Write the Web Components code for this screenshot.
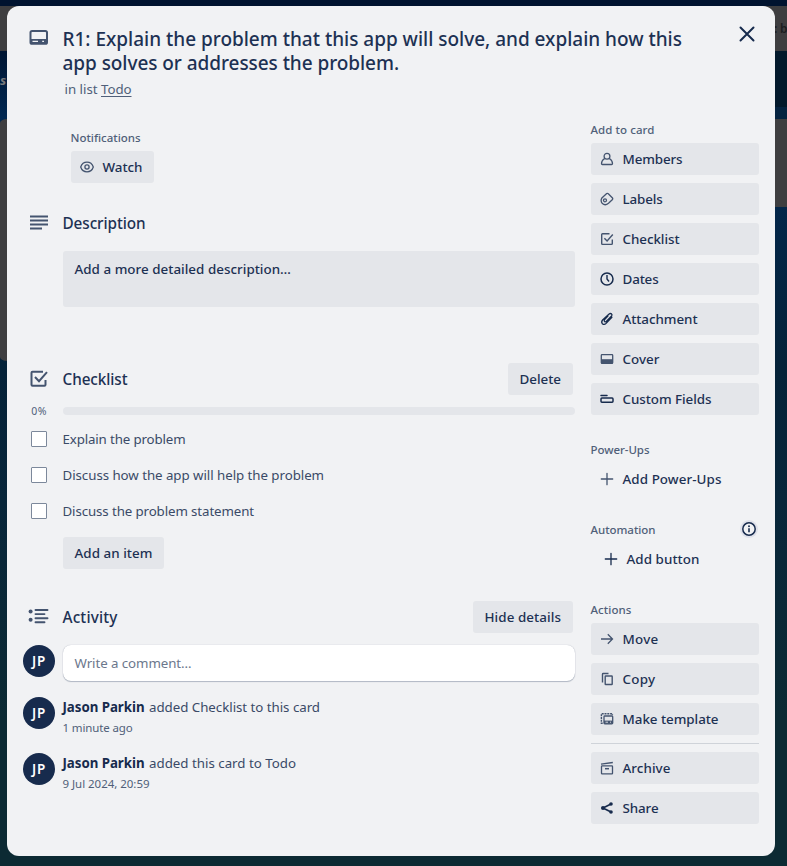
<!DOCTYPE html>
<html lang="en">
<head>
<meta charset="utf-8">
<title>Card</title>
<style>
html,body{margin:0;height:866px;overflow:hidden}
body{font-family:"Noto Sans","Open Sans",sans-serif;color:#1d3153}
</style>
</head>
<body>
<board-backdrop>
  <card-dialog>
    <card-header slot="header"></card-header>
    <card-main></card-main>
    <card-sidebar></card-sidebar>
  </card-dialog>
</board-backdrop>
<script>
const icons = {
  card:[20,20,'<rect x="1.500" y="4" width="16.500" height="12.800" rx="1.600" fill="none" stroke="currentColor" stroke-width="2"/><path d="M1.500 12h16.500v4.800H1.500z" fill="currentColor"/><path d="M3.500 14.300h5.500M13.200 14.300h1.800" stroke="#f1f2f4" stroke-width="1.300"/>'],
  lines:[20,20,'<path d="M1 3.500h18M1 7.500h18M1 11.500h18M1 15.500h12" fill="none" stroke="currentColor" stroke-width="2"/>'],
  check:[20,20,'<path d="M14 2.700H3.500Q2.500 2.700 2.500 3.700V15.700q0 1 1 1H15.500q1 0 1-1V11" fill="none" stroke="currentColor" stroke-width="2"/><path d="m6 8 4 4.200 8-9" fill="none" stroke="currentColor" stroke-width="2"/>'],
  activity:[22,20,'<circle cx="2.600" cy="4.500" r="2" fill="currentColor"/><circle cx="2.600" cy="12.700" r="2" fill="currentColor"/><path d="M7.500 3h12M7.500 7.100h9M7.500 11.200h12M7.500 15.300h9" stroke="currentColor" stroke-width="1.900" stroke-linecap="round"/>'],
  close:[18,18,'<path d="M2.500 2.500l13 13M15.500 2.500l-13 13" fill="none" stroke="currentColor" stroke-width="2" stroke-linecap="round"/>'],
  eye:[16,16,'<path d="M1.700 8C2.700 5 5 3.200 8 3.200S13.300 5 14.300 8C13.300 11 11 12.800 8 12.800S2.700 11 1.700 8Z" fill="none" stroke="currentColor" stroke-width="1.300"/><circle cx="8" cy="8" r="2.100" fill="none" stroke="currentColor" stroke-width="1.300"/>'],
  member:[16,16,'<circle cx="8" cy="5.200" r="2.900" fill="none" stroke="currentColor" stroke-width="1.300"/><path d="M5.700 7.500C3.500 8.700 2.500 10.500 2.500 12.600q0 .9.900.9h9.200q.9 0 .9-.9c0-2.100-1-3.900-3.200-5.100" fill="none" stroke="currentColor" stroke-width="1.300"/>'],
  label:[16,16,'<path d="M7.700 2.600q.8-.6 1.600.1l4.200 4.300q.6.800 0 1.500L9.500 12.300Q6.200 15 3.400 12.600 1.100 10 2.900 6.900Z" fill="none" stroke="currentColor" stroke-width="1.300"/><circle cx="6" cy="9.300" r="1.500" fill="none" stroke="currentColor" stroke-width="1.300"/>'],
  checklist:[16,16,'<path d="M10.500 2.800H3.500q-.8 0-.8.800v9q0 .8.800.8h9q.8 0 .8-.8V8.500" fill="none" stroke="currentColor" stroke-width="1.400"/><path d="m5.400 7.200 2.700 2.800 5.700-6.500" fill="none" stroke="currentColor" stroke-width="1.400"/>'],
  clock:[16,16,'<circle cx="8" cy="8" r="6" fill="none" stroke="currentColor" stroke-width="1.500"/><path d="M8 4v4l2 2.500" fill="none" stroke="currentColor" stroke-width="1.400"/>'],
  clip:[16,16,'<path d="M8.900 5.100 5.600 8.600q-.9 1.100 0 1.900 1 .8 1.900-.2l5.100-5.400q.9-1.200-.1-2-1.300-.9-2.400.2L3.600 9q-1.700 2.100-.2 3.700 1.800 1.500 3.700-.3l5.800-6.100" fill="none" stroke="currentColor" stroke-width="1.300" stroke-linecap="round"/>'],
  cover:[16,16,'<rect x="2.300" y="3.700" width="11.400" height="8.600" rx=".7" fill="none" stroke="currentColor" stroke-width="1.300"/><path d="M2 8.200h12v4.500H2z" fill="currentColor"/>'],
  fields:[16,16,'<path d="M2 4.500h6" stroke="currentColor" stroke-width="1.500" stroke-linecap="round"/><rect x="2" y="7" width="12" height="4.200" rx=".9" fill="none" stroke="currentColor" stroke-width="1.500"/>'],
  plus:[16,16,'<path d="M8 2.300v11.400M2.300 8h11.400" stroke="currentColor" stroke-width="1.300" stroke-linecap="round"/>'],
  arrow:[16,16,'<path d="M2 8h11M8.800 3.300 13.500 8l-4.700 4.700" fill="none" stroke="currentColor" stroke-width="1.300"/>'],
  copy:[16,16,'<path d="M3.500 11.500V3.200q0-.7.700-.7H9.500" fill="none" stroke="currentColor" stroke-width="1.400"/><rect x="6.200" y="5" width="7" height="8.500" rx=".5" fill="none" stroke="currentColor" stroke-width="1.400"/>'],
  template:[16,16,'<path d="M3.700 12.300H2.400V2.700h11v1.200" fill="none" stroke="currentColor" stroke-width="1.400" stroke-dasharray="2 .8"/><rect x="5" y="5" width="8.700" height="7.800" rx=".8" fill="none" stroke="currentColor" stroke-width="1.300"/><path d="M5 9.600h9v3.200H5z" fill="currentColor"/><path d="M6.500 11.200h2.500M11 11.200h1" stroke="#e4e6ea" stroke-width=".9"/>'],
  archive:[16,16,'<path d="M2 4.100 13.800 2.500" stroke="currentColor" stroke-width="1.300"/><rect x="2.500" y="5.800" width="11" height="8" rx=".6" fill="none" stroke="currentColor" stroke-width="1.300"/><path d="M6 8.700h4" stroke="currentColor" stroke-width="1.500"/>'],
  share:[16,16,'<path d="m12 4-8 4 8 4" fill="none" stroke="currentColor" stroke-width="1.700"/><circle cx="4" cy="8" r="2" fill="currentColor"/><circle cx="12" cy="4" r="1.800" fill="currentColor"/><circle cx="12" cy="12" r="1.800" fill="currentColor"/>'],
  info:[20,20,'<circle cx="10" cy="10" r="9" fill="#dfe1ea"/><circle cx="10" cy="10" r="6.200" fill="#f1f2f4" stroke="currentColor" stroke-width="1.500"/><path d="M10 9.200v4" stroke="currentColor" stroke-width="1.600"/><circle cx="10" cy="7.200" r=".95" fill="currentColor"/>']
};
function element(name, render){
  customElements.define(name, class extends HTMLElement{
    constructor(){super();this.attachShadow({mode:'open'});}
    connectedCallback(){this.shadowRoot.innerHTML=render(this);}
  });
}
element('board-backdrop',()=>`<style>
:host{display:grid;grid-template-columns:7px 768px 12px;height:866px;background:linear-gradient(#00132f 0 51px,#012852 120px,#052238 370px,#08263a 500px,#0c2a33 720px,#0c2a33);position:relative;overflow:hidden}
.edge{display:flex;flex-direction:column;padding-top:6px;color:#77797c;position:relative}
.bar,.list{background:#3e3e40}.bar{height:45px;flex:none}
.l .gap{height:68px;font:italic 700 13px/58px "Noto Sans",sans-serif;background:linear-gradient(#001633,#012852)}
.l .list{height:242px;border-radius:7px 0 0 7px / 4px 0 0 4px}
.r .gap{height:56px;background:#03192b}.r .gap2{height:12px;background:#052340}.r .list{height:88px}
.r .bar{display:flex;gap:4px;font:600 12px/46px "Noto Sans",sans-serif;color:#1b1d20;white-space:nowrap}
.corner{position:absolute;top:6px;height:26px;width:24px;background:#3e3e40}
slot{display:block}.mid{position:relative;padding-top:6px;z-index:1}
</style><i class="corner" style="left:0"></i><i class="corner" style="right:0"></i>
<div class="edge l"><div class="bar"></div><div class="gap">s</div><div class="list"></div></div>
<div class="mid"><slot></slot></div>
<div class="edge r"><div class="bar"><span style="width:2px;margin-left:-1px">:</span><span>b</span></div><div class="gap"></div><div class="gap2"></div><div class="list"></div></div>`);
element('card-dialog',()=>`<style>
:host{display:grid;grid-template-columns:552px 168px;column-gap:16px;grid-template-rows:93px 1fr;height:850px;box-sizing:border-box;padding:0 16px;border-radius:12px;background:#f1f2f4}
.head{grid-column:1/3}
</style><div class="head"><slot name="header"></slot></div><slot></slot>`);
element('ui-icon',h=>{const [w,t,s]=icons[h.getAttribute('name')];return `<style>:host{display:inline-flex;flex:none;color:#44546f}</style><svg width="${w}" height="${t}" viewBox="0 0 ${w} ${t}">${s}</svg>`;});
element('card-header',()=>`<style>
:host{display:grid;grid-template-columns:32px 1fr 24px;column-gap:8px;padding-top:21px}
.i{display:flex;justify-content:center;align-items:start}
h1{margin:0 0 0 -.5px;font-size:19px;line-height:24px;font-weight:500}
h1 fit-text{display:table}
p{margin:4px 0 0 1.500px;font-size:13.300px;line-height:20px;color:#505f79}u fit-text{text-decoration:underline;text-underline-offset:2px}
.x{display:flex;justify-content:center;align-items:start}.x ui-icon{color:#172b4d;margin-top:-2px}
</style><div class="i"><ui-icon name="card"></ui-icon></div>
<div><h1><fit-text w="619.500">R1: Explain the problem that this app will solve, and explain how this</fit-text><fit-text w="336.500">app solves or addresses the problem.</fit-text></h1>
<p><fit-text w="36.500">in list </fit-text><u><fit-text w="30.500">Todo</fit-text></u></p></div>
<div class="x"><ui-icon name="close"></ui-icon></div>`);
element('ui-button',h=>`<style>
:host{display:flex;align-items:center;height:32px;box-sizing:border-box;padding:0 12px 0 11.500px;border-radius:3px;background:#e4e6ea;font-size:13.400px;font-weight:500;line-height:20px;white-space:nowrap}
:host([icon]){padding:0 8px;gap:7.500px}
:host([plain]){background:none}:host([indent]){padding-left:12px}
</style>${h.hasAttribute('icon')?`<ui-icon name="${h.getAttribute('icon')}" ${h.hasAttribute('dark')?'style="color:#172b4d"':''}></ui-icon>`:''}<fit-text w="${h.getAttribute('w')}"><slot></slot></fit-text>`);
element('section-head',h=>`<style>
:host{display:grid;grid-template-columns:32px 1fr auto;column-gap:8px;align-items:center;height:32px;padding-right:2px}
.i{display:flex;justify-content:center}h3{margin:0 0 0 -.5px;font-size:15.300px;line-height:20px;font-weight:500}
</style><div class="i"><ui-icon name="${h.getAttribute('icon')}"></ui-icon></div><h3><fit-text w="${h.getAttribute('w')}">${h.getAttribute('label')}</fit-text></h3><slot></slot>`);
element('check-item',h=>`<style>
:host{display:grid;grid-template-columns:32px 1fr;column-gap:8px;align-items:center;height:36px;font-size:13.300px;line-height:20px;color:#3a4a67}
i{width:16px;height:16px;box-sizing:border-box;border:1px solid #7c889b;background:#fff;justify-self:center;border-radius:1px}
span{margin-left:-.5px}
</style><i></i><span><fit-text w="${h.getAttribute('w')}"><slot></slot></fit-text></span>`);
element('user-avatar',()=>`<style>:host{display:flex;width:32px;height:32px;border-radius:50%;background:#172b4d;color:#fff;align-items:center;justify-content:center;font-size:13.500px;line-height:20px;font-weight:600}</style><fit-text w="14">JP</fit-text>`);
element('activity-entry',h=>`<style>
:host{display:grid;grid-template-columns:32px 1fr;column-gap:8px;height:56px;font-size:13.300px;line-height:20px}
.t{color:#505f79;font-size:11.500px;line-height:22px}.m{color:#3a4a67}b{color:#172b4d;font-weight:700}.m,.t{height:20px;margin-left:-.5px}
</style><user-avatar></user-avatar><div><div class="m"><b><fit-text w="82">Jason Parkin</fit-text></b><fit-text w="${h.getAttribute('w')}" style="margin-left:4.500px"><slot></slot></fit-text></div><div class="t"><fit-text w="${h.getAttribute('tw')}">${h.getAttribute('time')}</fit-text></div></div>`);
element('card-main',()=>`<style>
:host{display:block}
.notify{margin:30px 0 0 47.500px;font-size:11.500px;line-height:18px;color:#505f79;font-weight:500}
.watch{display:flex;margin:4px 0 0 48px}.watch ui-button{width:83px}
.desc{margin:12px 0 0 40px;height:56px;box-sizing:border-box;padding:8px 11.500px;background:#e4e6ea;border-radius:3px;font-size:13.400px;line-height:20px;font-weight:500}
.prog{display:grid;grid-template-columns:32px 1fr;column-gap:8px;align-items:center;height:8px;margin:12px 0 6px;font-size:10.500px;line-height:8px;color:#505f79}
.prog span{text-align:center}.prog i{height:8px;border-radius:4px;background:#e4e6ea}
.add{display:flex;margin:8px 0 32px 40px}.add ui-button{width:101px}
.comment{display:grid;grid-template-columns:32px 1fr;column-gap:8px;margin:12px 0 16px;height:36px}
.box{background:#fff;border-radius:8px;box-shadow:0 1px 1px #091e4240,0 0 1px #091e424f;font-size:13.300px;line-height:36px;padding:0 11.500px;color:#6b778c}
</style>
<div class="notify"><fit-text w="70">Notifications</fit-text></div>
<div class="watch"><ui-button icon="eye" w="40">Watch</ui-button></div>
<section-head style="margin-top:24px" icon="lines" label="Description" w="83"></section-head>
<div class="desc"><fit-text w="216.500">Add a more detailed description…</fit-text></div>
<section-head style="margin-top:56px" icon="check" label="Checklist" w="65"><ui-button w="41.500">Delete</ui-button></section-head>
<div class="prog"><span><fit-text w="15.500">0%</fit-text></span><i></i></div>
<check-item w="123">Explain the problem</check-item><check-item w="261.500">Discuss how the app will help the problem</check-item><check-item w="191.500">Discuss the problem statement</check-item>
<div class="add"><ui-button w="78">Add an item</ui-button></div>
<section-head icon="activity" label="Activity" w="55"><ui-button w="76.500">Hide details</ui-button></section-head>
<div class="comment"><user-avatar></user-avatar><div class="box"><fit-text w="117">Write a comment…</fit-text></div></div>
<activity-entry w="171" tw="70" time="1 minute ago">added Checklist to this card</activity-entry>
<activity-entry w="147" tw="87" time="9 Jul 2024, 20:59">added this card to Todo</activity-entry>`);
element('side-label',h=>`<style>:host{display:flex;align-items:center;justify-content:space-between;height:20px;font-size:11.500px;line-height:20px;font-weight:500;color:#505f79}.t{padding-top:1px;margin-left:-.5px}</style><span class="t"><fit-text w="${h.getAttribute('w')}">${h.getAttribute('text')}</fit-text></span><slot></slot>`);
element('side-group',h=>`<style>:host{display:block;margin-bottom:24px}.b{display:grid;row-gap:8px;margin-top:4px}</style><side-label text="${h.getAttribute('label')}" w="${h.getAttribute('w')}">${h.hasAttribute('info')?'<ui-icon name="info" style="color:#172b4d"></ui-icon>':''}</side-label><div class="b"><slot></slot></div>`);
element('card-sidebar',()=>`<style>:host{display:block;padding-top:20px}hr{width:100%;height:1px;border:0;margin:0;background:#cfd3d9}</style>
<side-group label="Add to card" w="64">
<ui-button icon="member" w="60">Members</ui-button><ui-button icon="label" w="40">Labels</ui-button><ui-button icon="checklist" w="57">Checklist</ui-button><ui-button icon="clock" dark w="36">Dates</ui-button><ui-button icon="clip" dark w="75">Attachment</ui-button><ui-button icon="cover" w="37">Cover</ui-button><ui-button icon="fields" dark w="89">Custom Fields</ui-button></side-group>
<side-group label="Power-Ups" w="59"><ui-button icon="plus" plain w="99">Add Power-Ups</ui-button></side-group>
<side-group label="Automation" w="65" info><ui-button icon="plus" plain indent dark w="73">Add button</ui-button></side-group>
<side-group label="Actions" w="41"><ui-button icon="arrow" w="36">Move</ui-button><ui-button icon="copy" w="33">Copy</ui-button><ui-button icon="template" w="96">Make template</ui-button><hr><ui-button icon="archive" w="48">Archive</ui-button><ui-button icon="share" dark w="36">Share</ui-button></side-group>`);
/* Tracks its text so that the run takes up the width given in "w". */
customElements.define('fit-text', class extends HTMLElement{
  constructor(){super();this.attachShadow({mode:'open'}).innerHTML='<style>:host{display:inline-block;white-space:pre}</style><slot></slot>';}
  connectedCallback(){
    const slot=this.querySelector('slot');
    const text=slot?slot.assignedNodes().map(n=>n.textContent).join(''):this.textContent;
    const gap=(+this.getAttribute('w')-this.getBoundingClientRect().width)/text.length;
    this.style.letterSpacing=gap.toFixed(3)+'px';
  }
});
</script>
</body>
</html>
